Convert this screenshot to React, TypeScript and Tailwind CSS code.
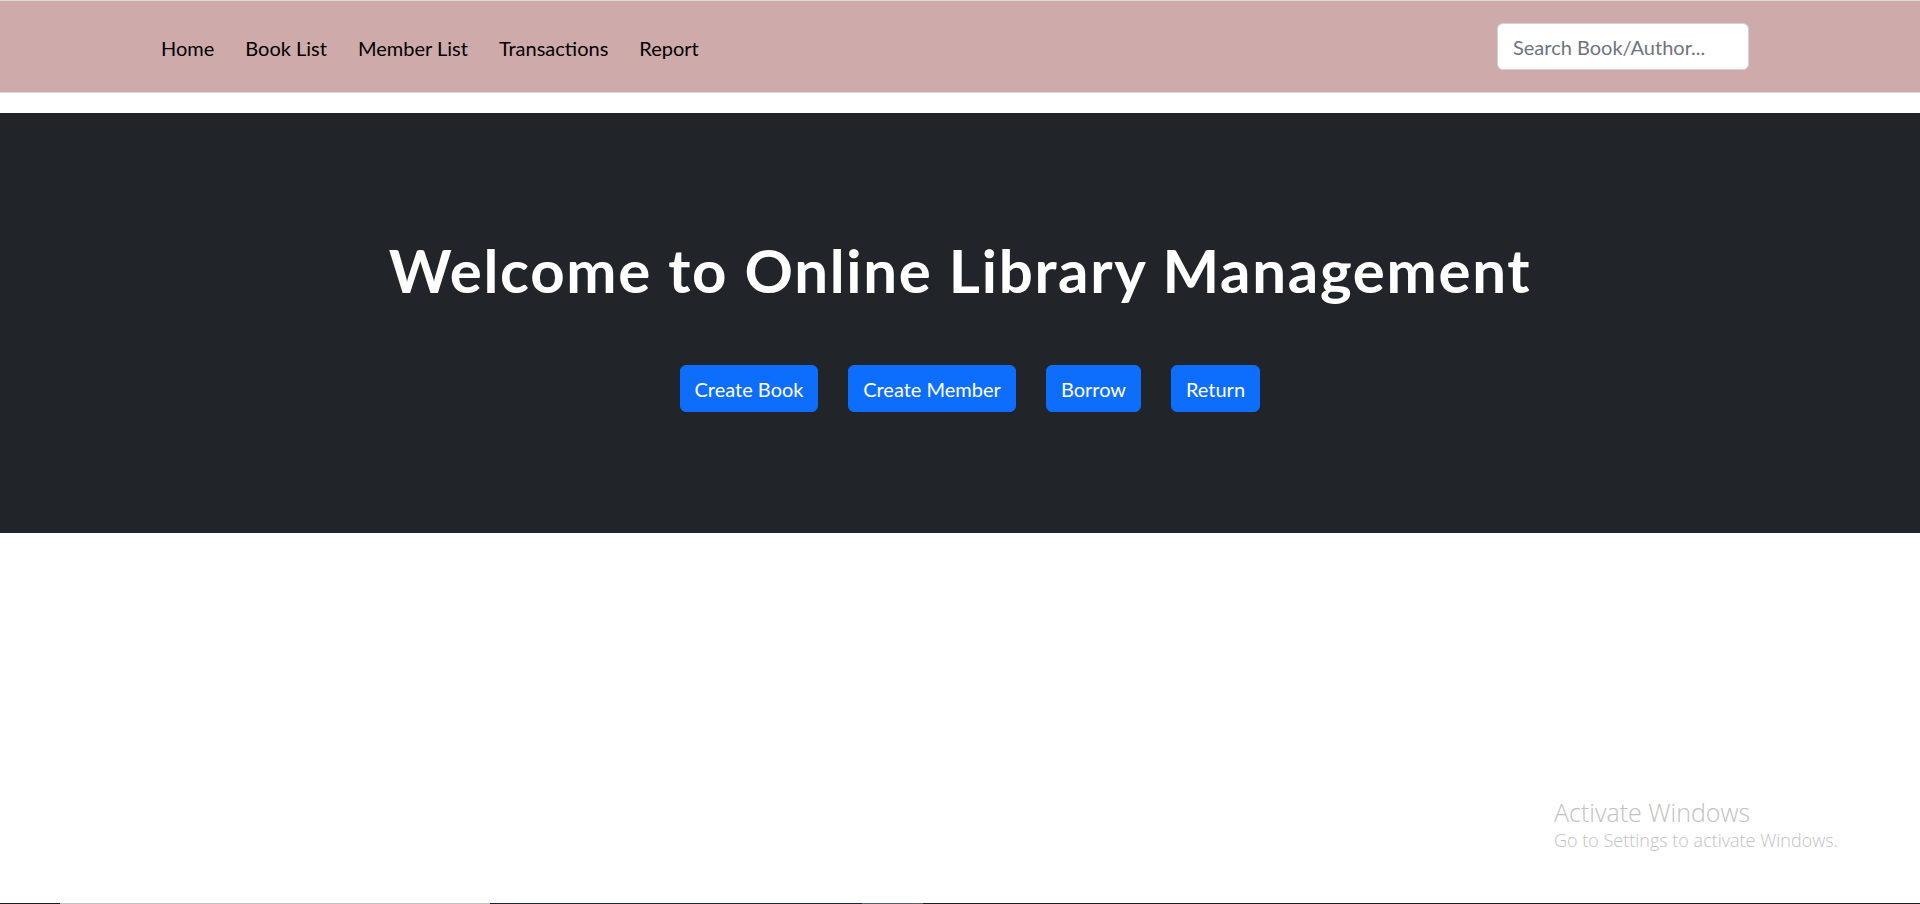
import React from "react";

const font = { fontFamily: 'Lato, "Noto Sans", sans-serif' };

export default function App() {
  const links = ["Home", "Book List", "Member List", "Transactions", "Report"];
  const buttons = [
    { label: "Create Book", w: "w-[138px]" },
    { label: "Create Member", w: "w-[168px]" },
    { label: "Borrow", w: "w-[95px]" },
    { label: "Return", w: "w-[89px]" },
  ];
  return (
    <div className="relative min-h-[904px] flex flex-col bg-white" style={font}>
      <nav className="h-[93px] border-t border-b border-[#dcdcdc] bg-[#cfaaaa] flex items-center pl-[161px] pr-[171px]">
        <ul className="flex items-center gap-[31px] text-[20px] text-black">
          {links.map((l) => (
            <li key={l} className="leading-[30px] pt-[2px]">{l}</li>
          ))}
        </ul>
        <div className="ml-auto">
          <input
            placeholder="Search Book/Author..."
            className="w-[252px] h-[47px] rounded-[6px] border border-[#ced4da] bg-white px-[15px] text-[20px] text-[#212529] placeholder:text-[#6c757d] outline-none"
          />
        </div>
      </nav>
      <section className="mt-[20px] bg-[#212529] pt-[121px] pb-[121px] flex flex-col items-center">
        <h1 className="text-[60px] font-bold leading-[72px] text-white tracking-[1.7px]">
          Welcome to Online Library Management
        </h1>
        <div className="mt-[59px] pl-[20px] flex gap-[30px]">
          {buttons.map((b) => (
            <button
              key={b.label}
              className={`${b.w} h-[47px] rounded-[6px] border border-[#0d6efd] bg-[#0d6efd] text-white text-[20px] leading-[30px] text-center`}
            >
              {b.label}
            </button>
          ))}
        </div>
      </section>
      <div className="flex-1" />
      <div className="flex h-px w-full">
        <div className="w-[60px] bg-[#1b1b24]" />
        <div className="w-[430px] bg-[#c4c4c4]" />
        <div className="w-[372px] bg-[#1e1f3a]" />
        <div className="w-[61px] bg-[#5a6070]" />
        <div className="flex-1 bg-[#1f1f1f]" />
      </div>
      <div
        className="absolute left-[1554px] top-[797px] text-[#c2c2c2] pointer-events-none"
        style={{ fontFamily: '"Open Sans", "Noto Sans", sans-serif' }}
      >
        <div className="text-[25px] leading-[31px] font-light">Activate Windows</div>
        <div className="text-[18px] leading-[25px] font-light">Go to Settings to activate Windows.</div>
      </div>
    </div>
  );
}
